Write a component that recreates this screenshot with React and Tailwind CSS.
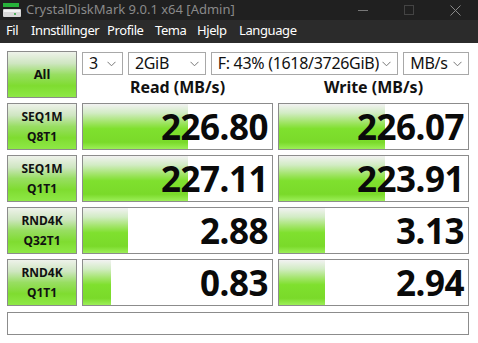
import React from "react";

const barBg =
  "bg-[linear-gradient(to_bottom,#f2f2f2_0%,#d2ecc4_20%,#9ee462_42%,#7fe02e_55%,#7ada2a_85%,#9cef58_100%)]";
const btnBg =
  "bg-[linear-gradient(to_bottom,#eef2ea_0%,#cfe6c2_25%,#98de62_50%,#7fdc30_75%,#8ee846_100%)]";

function Chevron() {
  return (
    <svg width="9" height="6" viewBox="0 0 9 6" className="shrink-0">
      <path d="M0.5 0.8 L4.5 4.8 L8.5 0.8" fill="none" stroke="#777" strokeWidth="1" />
    </svg>
  );
}

function Combo({ w, text }) {
  return (
    <div
      className={`${w} h-[23px] border border-[#a8a8a8] bg-white flex items-center pl-[6px] pr-[6px] gap-[3px] overflow-hidden`}
    >
      <span className="flex-1 min-w-0 whitespace-nowrap overflow-hidden text-[16px] leading-[21px] tracking-[-0.3px] text-[#111]">{text}</span>
      <Chevron />
    </div>
  );
}

function Label({ a, b }) {
  return (
    <div
      className={`h-[47px] border border-[#8c8c8c] ${btnBg} flex flex-col items-center justify-center text-[12px] font-bold leading-[20px] text-[#111]`}
    >
      <span>{a}</span>
      <span>{b}</span>
    </div>
  );
}

function Cell({ value, pct }) {
  return (
    <div className="relative h-[47px] border border-[#8c8c8c] bg-white overflow-hidden">
      <div className={`absolute left-0 top-0 bottom-0 ${barBg}`} style={{ width: pct + "px" }} />
      <div className="relative h-full flex items-center justify-end pr-[4px] text-[35px] font-bold leading-none text-[#0a0a0a] tracking-[-0.5px]">
        {value}
      </div>
    </div>
  );
}

export default function App() {
  const rows = [
    ["SEQ1M", "Q8T1", "226.80", 105, "226.07", 106],
    ["SEQ1M", "Q1T1", "227.11", 105, "223.91", 106],
    ["RND4K", "Q32T1", "2.88", 45, "3.13", 46],
    ["RND4K", "Q1T1", "0.83", 28, "2.94", 46],
  ];
  return (
    <div className="w-[478px] h-[343px] bg-white overflow-hidden" style={{ fontFamily: '"Noto Sans", "Open Sans", sans-serif' }}>
      <div className="h-[20px] bg-[#202020] flex items-center">
        <svg width="22" height="16" viewBox="0 0 22 16" className="ml-[1px]">
          <rect x="2" y="1" width="16" height="4" fill="#27b13a" />
          <rect x="2" y="7" width="18" height="8" rx="1" fill="#d8d8d8" />
          <rect x="3" y="8" width="16" height="2" fill="#f4f4f4" />
          <circle cx="14" cy="12" r="1" fill="#2aa43a" />
        </svg>
        <span className="ml-[3px] text-[13px] text-[#8a8a8a] whitespace-nowrap">CrystalDiskMark 9.0.1 x64 [Admin]</span>
        <div className="flex-1" />
        <div className="w-[46px] flex justify-center">
          <div className="w-[10px] h-px bg-[#777]" />
        </div>
        <div className="w-[46px] flex justify-center">
          <div className="w-[10px] h-[10px] border border-[#444]" />
        </div>
        <div className="w-[46px] flex justify-center">
          <svg width="11" height="11" viewBox="0 0 11 11">
            <path d="M0.5 0.5 L10.5 10.5 M10.5 0.5 L0.5 10.5" stroke="#888" strokeWidth="1" />
          </svg>
        </div>
      </div>
      <div className="h-[23px] bg-[#2b2b2b] flex items-center text-[13px] tracking-[-0.4px] text-white pl-[6px] pb-[1px] whitespace-nowrap">
        <span className="w-[25px]">Fil</span>
        <span className="w-[76px]">Innstillinger</span>
        <span className="w-[48px]">Profile</span>
        <span className="w-[42px]">Tema</span>
        <span className="w-[42px]">Hjelp</span>
        <span>Language</span>
      </div>
      <div className="pl-[7px] pt-[8px]">
        <div className="grid grid-cols-[70px_191px_191px] grid-rows-[47px_47px_47px_47px_47px] gap-[5px]">
          <div
            className={`border border-[#8c8c8c] ${btnBg} flex items-center justify-center text-[13px] font-bold text-[#111]`}
          >
            All
          </div>
          <div className="col-span-2 flex flex-col">
            <div className="flex gap-[5px] pt-[1px]">
              <Combo w="w-[41px]" text="3" />
              <Combo w="w-[78px]" text="2GiB" />
              <Combo w="w-[188px]" text="F: 43% (1618/3726GiB)" />
              <Combo w="w-[66px]" text="MB/s" />
            </div>
            <div className="flex flex-1 items-center text-[16px] font-bold text-[#111]">
              <div className="w-[191px] text-center">Read (MB/s)</div>
              <div className="w-[5px]" />
              <div className="w-[191px] text-center">Write (MB/s)</div>
            </div>
          </div>
          {rows.map((r, i) => (
            <React.Fragment key={i}>
              <Label a={r[0]} b={r[1]} />
              <Cell value={r[2]} pct={r[3]} />
              <Cell value={r[4]} pct={r[5]} />
            </React.Fragment>
          ))}
        </div>
        <div className="mt-[6px] w-[462px] h-[23px] border border-[#8c8c8c] bg-white" />
      </div>
    </div>
  );
}
